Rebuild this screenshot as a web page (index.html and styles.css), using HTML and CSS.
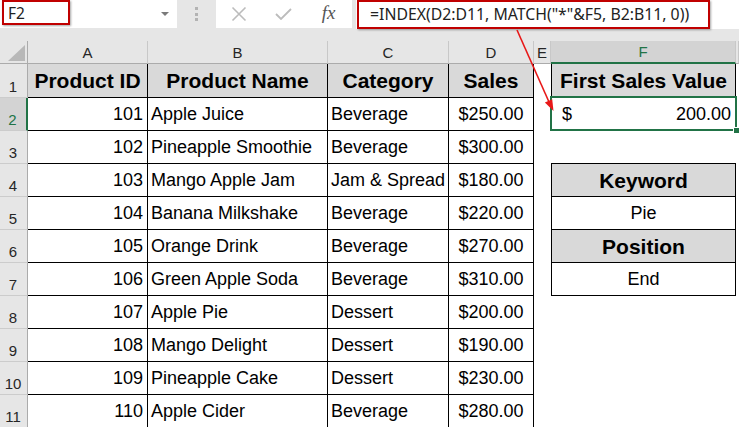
FILE: index.html
```html
<!DOCTYPE html>
<html>
<head>
<meta charset="utf-8">
<link rel="stylesheet" href="styles.css">
</head>
<body>
<div class="app">
  <div class="toolbar">
    <div class="namebox"><div class="nb-red">F2</div><span class="caret"></span></div>
    <div class="grip"><i></i><i></i><i></i></div>
    <div class="fxbox">
      <span class="ic"><svg width="16" height="16" viewBox="0 0 16 16"><path d="M1.5 1.5 L14.5 14.5 M14.5 1.5 L1.5 14.5" stroke="#bcbcbc" stroke-width="1.6" fill="none"/></svg></span>
      <span class="ic"><svg width="17" height="12" viewBox="0 0 17 12"><path d="M1 6 L6 11 L16 1" stroke="#bcbcbc" stroke-width="1.8" fill="none"/></svg></span>
      <span class="ic fx">fx</span>
    </div>
    <div class="fbar"><div class="fb-red">=INDEX(D2:D11, MATCH("*"&amp;F5, B2:B11, 0))</div></div>
  </div>
  <div class="sheet">
    <div class="corner"></div><div class="ch">A</div><div class="ch">B</div><div class="ch">C</div><div class="ch">D</div><div class="ch">E</div><div class="ch sel">F</div><div class="ch"></div>

    <div class="rh">1</div><div class="b hd">Product ID</div><div class="b hd">Product Name</div><div class="b hd">Category</div><div class="b hd">Sales</div><div></div><div class="bl b hd">First Sales Value</div><div></div>

    <div class="rh sel">2</div><div class="b r">101</div><div class="b l">Apple Juice</div><div class="b l">Beverage</div><div class="b m">$250.00</div><div></div><div class="bl b acct"><span>$</span><span>200.00</span><span class="selbox"><span class="handle"></span></span></div><div></div>

    <div class="rh">3</div><div class="b r">102</div><div class="b l">Pineapple Smoothie</div><div class="b l">Beverage</div><div class="b m">$300.00</div><div></div><div class="bb"></div><div></div>

    <div class="rh">4</div><div class="b r">103</div><div class="b l">Mango Apple Jam</div><div class="b l">Jam &amp; Spread</div><div class="b m">$180.00</div><div></div><div class="bl b hd">Keyword</div><div></div>

    <div class="rh">5</div><div class="b r">104</div><div class="b l">Banana Milkshake</div><div class="b l">Beverage</div><div class="b m">$220.00</div><div></div><div class="bl b m">Pie</div><div></div>

    <div class="rh">6</div><div class="b r">105</div><div class="b l">Orange Drink</div><div class="b l">Beverage</div><div class="b m">$270.00</div><div></div><div class="bl b hd">Position</div><div></div>

    <div class="rh">7</div><div class="b r">106</div><div class="b l">Green Apple Soda</div><div class="b l">Beverage</div><div class="b m">$310.00</div><div></div><div class="bl b m">End</div><div></div>

    <div class="rh">8</div><div class="b r">107</div><div class="b l">Apple Pie</div><div class="b l">Dessert</div><div class="b m">$200.00</div><div></div><div></div><div></div>

    <div class="rh">9</div><div class="b r">108</div><div class="b l">Mango Delight</div><div class="b l">Dessert</div><div class="b m">$190.00</div><div></div><div></div><div></div>

    <div class="rh">10</div><div class="b r">109</div><div class="b l">Pineapple Cake</div><div class="b l">Dessert</div><div class="b m">$230.00</div><div></div><div></div><div></div>

    <div class="rh">11</div><div class="b r">110</div><div class="b l">Apple Cider</div><div class="b l">Beverage</div><div class="b m">$280.00</div><div></div><div></div><div></div>
  </div>
  <svg class="arrow" width="739" height="427" viewBox="0 0 739 427">
    <line x1="517" y1="30" x2="549" y2="102" stroke="#e81818" stroke-width="1.6"/>
    <polygon points="553.5,111 552.2,99.3 544.9,102.6" fill="#e81818"/>
  </svg>
</div>
</body>
</html>
```
FILE: styles.css
```css
html, body {
  margin: 0;
  padding: 0;
  background: #ffffff;
}
.app {
  position: relative;
  width: 739px;
  height: 427px;
  overflow: hidden;
  font-family: "Liberation Sans", Arial, sans-serif;
}
.toolbar {
  height: 41px;
  display: flex;
  align-items: flex-start;
  background: #e6e6e6;
}
.namebox {
  width: 177px;
  height: 28px;
  background: #ffffff;
  display: flex;
  align-items: flex-start;
}
.nb-red {
  width: 68px;
  height: 25px;
  margin-left: 2px;
  box-sizing: border-box;
  border: 2px solid #c00000;
  box-shadow: 1px 1px 2px rgba(0, 0, 0, 0.35);
  font-family: "Noto Sans", sans-serif;
  font-size: 15.5px;
  line-height: 21px;
  padding: 1px 0 0 4px;
  color: #222;
}
.caret {
  margin-left: auto;
  margin-right: 8px;
  margin-top: 12px;
  width: 0;
  height: 0;
  border-left: 4px solid transparent;
  border-right: 4px solid transparent;
  border-top: 4px solid #7a7a7a;
}
.grip {
  width: 39px;
  height: 28px;
  display: flex;
  flex-direction: column;
  align-items: center;
  justify-content: center;
  gap: 2.5px;
}
.grip i {
  display: block;
  width: 3px;
  height: 3px;
  background: #b3b3b3;
}
.fxbox {
  width: 136px;
  height: 28px;
  background: #ffffff;
  display: flex;
}
.ic {
  width: 45px;
  height: 28px;
  display: flex;
  align-items: center;
  justify-content: center;
}
.fx {
  font-family: "Liberation Serif", serif;
  font-style: italic;
  font-size: 19px;
  color: #555555;
  padding-bottom: 2px;
  box-sizing: border-box;
}
.fbar {
  flex: 1;
  height: 29px;
  margin-left: 4px;
  background: #ffffff;
}
.fb-red {
  width: 353px;
  height: 29px;
  margin-left: 1px;
  box-sizing: border-box;
  border: 2px solid #c00000;
  box-shadow: 1px 1px 2px rgba(0, 0, 0, 0.35);
  font-family: "Noto Sans", sans-serif;
  font-size: 15.8px;
  line-height: 25px;
  padding-left: 11px;
  white-space: nowrap;
  color: #222;
}
.sheet {
  display: grid;
  grid-template-columns: 28px 120px 180px 121px 85px 17px 185px 3px;
  grid-template-rows: 23px 34px repeat(10, 33px);
}
.sheet > div {
  box-sizing: border-box;
  display: flex;
  align-items: center;
  white-space: nowrap;
  font-size: 18px;
  color: #000;
  background: #ffffff;
  min-width: 0;
  padding-top: 1px;
}
.sheet > .corner {
  background: #e6e6e6;
  border-right: 1px solid #ababab;
  border-bottom: 1px solid #ababab;
  align-items: flex-end;
  justify-content: flex-end;
  padding: 0 2px 2px 0;
}
.corner::after {
  content: "";
  width: 0;
  height: 0;
  border-left: 17px solid transparent;
  border-bottom: 16px solid #b8b8b8;
}
.sheet > .ch {
  background: #e6e6e6;
  border-right: 1px solid #c8c8c8;
  border-bottom: 1px solid #ababab;
  justify-content: center;
  font-size: 15px;
  color: #262626;
  padding-top: 0;
}
.sheet > .ch.sel {
  background: #d3d3d3;
  color: #217346;
  border-bottom: 2px solid #217346;
}
.sheet > .rh {
  background: #e6e6e6;
  border-right: 1px solid #ababab;
  border-bottom: 1px solid #cccccc;
  justify-content: center;
  align-items: flex-end;
  padding: 0 1px 2px 0;
  font-size: 15px;
  color: #262626;
}
.sheet > .rh.sel {
  background: #d3d3d3;
  color: #217346;
  border-right: 2px solid #217346;
}
.sheet > .b {
  border-right: 1px solid #000;
  border-bottom: 1px solid #000;
}
.sheet > .bl {
  border-left: 1px solid #000;
}
.sheet > .bb {
  border-bottom: 1px solid #000;
}
.sheet > .hd {
  background: #d9d9d9;
  font-weight: bold;
  font-size: 21px;
  justify-content: center;
}
.sheet > .r {
  justify-content: flex-end;
  padding-right: 4px;
}
.sheet > .l {
  padding-left: 3px;
}
.sheet > .m {
  justify-content: center;
}
.sheet > .acct {
  justify-content: space-between;
  padding: 1px 4px 0 10px;
  position: relative;
}
.selbox {
  position: absolute;
  top: -2px;
  left: -2px;
  right: -2px;
  bottom: -1px;
  border: 2px solid #217346;
}
.handle {
  position: absolute;
  right: -5px;
  bottom: -5px;
  width: 5px;
  height: 5px;
  background: #217346;
  border: 1px solid #ffffff;
}
.arrow {
  position: absolute;
  top: 0;
  left: 0;
  pointer-events: none;
}
```
